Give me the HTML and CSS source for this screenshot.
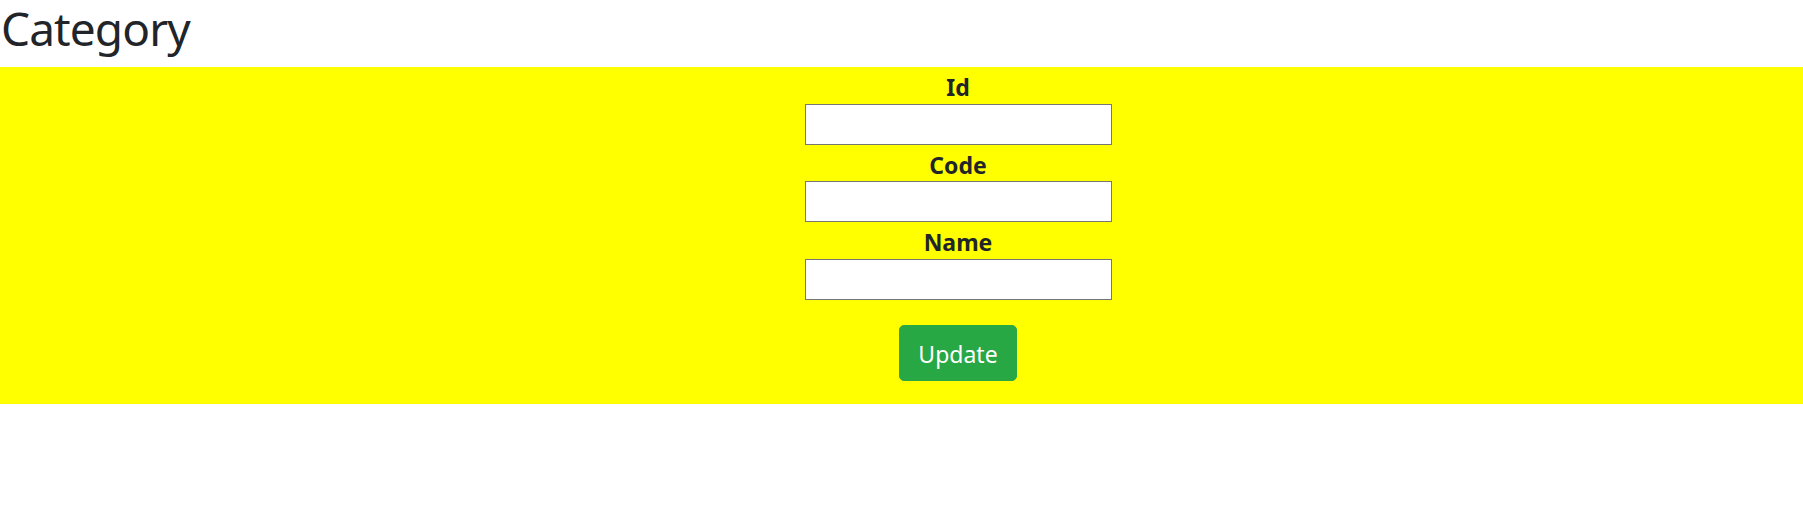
FILE: index.html
```html
<!DOCTYPE html>
<html lang="en">
<head>
<meta charset="utf-8">
<title>Category</title>
<link rel="stylesheet" href="styles.css">
</head>
<body>
<h1 class="page-title">Category</h1>
<section class="panel">
  <form class="edit-form">
    <label class="field-label" for="id">Id</label>
    <input class="field-input" id="id" type="text">
    <label class="field-label" for="code">Code</label>
    <input class="field-input" id="code" type="text">
    <label class="field-label" for="name">Name</label>
    <input class="field-input" id="name" type="text">
    <button class="btn-update" type="button">Update</button>
  </form>
</section>
</body>
</html>
```

FILE: styles.css
```css
html, body {
  margin: 0;
  padding: 0;
  background: #ffffff;
  font-family: "Noto Sans", "Open Sans", "Liberation Sans", sans-serif;
  color: #212529;
}

.page-title {
  margin: 0;
  padding-left: 1px;
  height: 67px;
  font-size: 46px;
  font-weight: 400;
  line-height: 56px;
  letter-spacing: -0.9px;
  color: #212529;
}

.panel {
  background: #ffff00;
  height: 337px;
  display: flex;
  justify-content: center;
  padding-left: 113px;
}

.edit-form {
  width: 307px;
  display: flex;
  flex-direction: column;
  align-items: center;
}

.field-label {
  display: block;
  box-sizing: border-box;
  height: 36.5px;
  padding-top: 2px;
  line-height: 36px;
  font-size: 23px;
  font-weight: 700;
  color: #212529;
  text-align: center;
}

.field-input {
  box-sizing: border-box;
  width: 307px;
  height: 41px;
  margin: 0;
  border: 1px solid #767676;
  background: #ffffff;
  padding: 0 6px;
  font-size: 18px;
}

.btn-update {
  box-sizing: border-box;
  margin-top: 25px;
  height: 56px;
  padding: 3px 18px 0;
  border: 1px solid #28a745;
  border-radius: 5px;
  background: #28a745;
  color: #ffffff;
  font-family: inherit;
  font-size: 23px;
  line-height: 1.5;
  cursor: pointer;
}
```
